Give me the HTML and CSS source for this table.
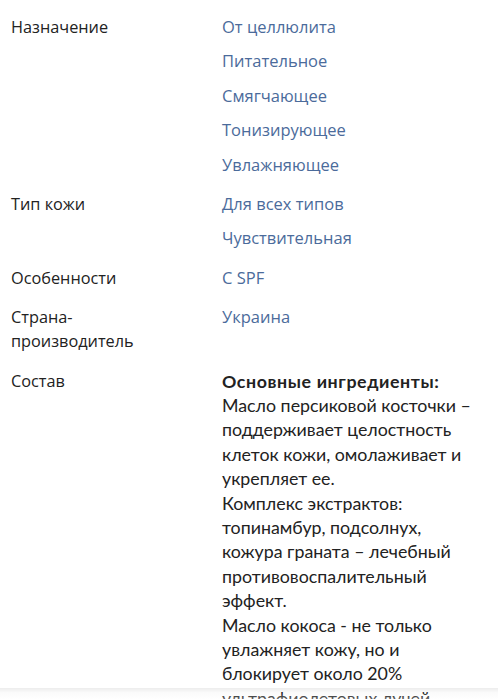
FILE: index.html
```html
<!DOCTYPE html>
<html lang="ru">
<head>
<meta charset="utf-8">
<link rel="stylesheet" href="styles.css">
</head>
<body>
<div class="specs">
  <div class="row">
    <div class="label">Назначение</div>
    <div class="values">
      <a class="link">От целлюлита</a>
      <a class="link">Питательное</a>
      <a class="link">Смягчающее</a>
      <a class="link">Тонизирующее</a>
      <a class="link">Увлажняющее</a>
    </div>
  </div>
  <div class="row">
    <div class="label">Тип кожи</div>
    <div class="values">
      <a class="link">Для всех типов</a>
      <a class="link">Чувствительная</a>
    </div>
  </div>
  <div class="row">
    <div class="label">Особенности</div>
    <div class="values">
      <a class="link">С SPF</a>
    </div>
  </div>
  <div class="row">
    <div class="label">Страна-<br>производитель</div>
    <div class="values">
      <a class="link">Украина</a>
    </div>
  </div>
  <div class="row">
    <div class="label">Состав</div>
    <div class="values composition">
      <b>Основные ингредиенты:</b><br>
      Масло персиковой косточки – поддерживает целостность клеток кожи, омолаживает и укрепляет ее.<br>
      Комплекс экстрактов: топинамбур, подсолнух, кожура граната – лечебный противовоспалительный эффект.<br>
      Масло кокоса - не только увлажняет кожу, но и блокирует около 20% ультрафиолетовых лучей.
    </div>
  </div>
</div>
<div class="bottom-shade"></div>
</body>
</html>
```
FILE: styles.css
```css
html, body {
  margin: 0;
  padding: 0;
  background: #fff;
}
body {
  font-family: "Open Sans", "Liberation Sans", sans-serif;
  color: #222;
}
.specs {
  display: flex;
  flex-direction: column;
  gap: 15.4px;
  padding: 15px 0 0 11px;
}
.row {
  display: grid;
  grid-template-columns: 211px 1fr;
}
.label {
  font-size: 16.3px;
  line-height: 24px;
  color: #222;
}
.values {
  display: flex;
  flex-direction: column;
  gap: 10.4px;
}
.link {
  font-size: 16.5px;
  line-height: 24px;
  color: #4b6b9b;
}
.composition {
  display: block;
  font-family: Lato, "Open Sans", sans-serif;
  font-size: 17.8px;
  line-height: 24.4px;
  color: #222;
  width: 262px;
}
.composition b {
  font-weight: 700;
  letter-spacing: 0.6px;
}
.bottom-shade {
  position: fixed;
  left: 0;
  right: 0;
  bottom: 0;
  height: 11px;
  background: linear-gradient(rgba(0, 0, 0, 0.07), rgba(0, 0, 0, 0.02) 40%, rgba(255, 255, 255, 0.3));
}
```
